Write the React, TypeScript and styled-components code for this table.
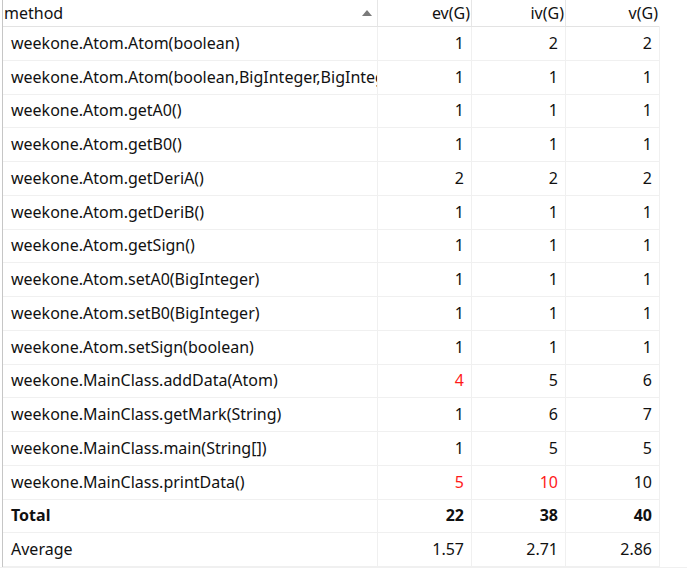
import React from 'react';
import styled, { createGlobalStyle } from 'styled-components';

interface MetricRow {
  method: string;
  ev: string;
  iv: string;
  v: string;
  warn?: Array<'ev' | 'iv' | 'v'>;
  bold?: boolean;
}

const rows: MetricRow[] = [
  { method: 'weekone.Atom.Atom(boolean)', ev: '1', iv: '2', v: '2' },
  { method: 'weekone.Atom.Atom(boolean,BigInteger,BigInteger)', ev: '1', iv: '1', v: '1' },
  { method: 'weekone.Atom.getA0()', ev: '1', iv: '1', v: '1' },
  { method: 'weekone.Atom.getB0()', ev: '1', iv: '1', v: '1' },
  { method: 'weekone.Atom.getDeriA()', ev: '2', iv: '2', v: '2' },
  { method: 'weekone.Atom.getDeriB()', ev: '1', iv: '1', v: '1' },
  { method: 'weekone.Atom.getSign()', ev: '1', iv: '1', v: '1' },
  { method: 'weekone.Atom.setA0(BigInteger)', ev: '1', iv: '1', v: '1' },
  { method: 'weekone.Atom.setB0(BigInteger)', ev: '1', iv: '1', v: '1' },
  { method: 'weekone.Atom.setSign(boolean)', ev: '1', iv: '1', v: '1' },
  { method: 'weekone.MainClass.addData(Atom)', ev: '4', iv: '5', v: '6', warn: ['ev'] },
  { method: 'weekone.MainClass.getMark(String)', ev: '1', iv: '6', v: '7' },
  { method: 'weekone.MainClass.main(String[])', ev: '1', iv: '5', v: '5' },
  { method: 'weekone.MainClass.printData()', ev: '5', iv: '10', v: '10', warn: ['ev', 'iv'] },
  { method: 'Total', ev: '22', iv: '38', v: '40', bold: true },
  { method: 'Average', ev: '1.57', iv: '2.71', v: '2.86' },
];

const GlobalStyle = createGlobalStyle`
  html, body {
    margin: 0;
    padding: 0;
    background: #f0f0f0;
  }
  body {
    font-family: "Noto Sans", "Noto Sans CJK SC", sans-serif;
    color: #111;
  }
`;

const Page = styled.div`
  width: 687px;
  height: 568px;
  background: #ffffff;
  overflow: hidden;
  display: flex;
  flex-direction: column;
`;

const Table = styled.div`
  margin-left: 2px;
  border-left: 1px solid #c6c6c6;
  display: grid;
  grid-template-columns: 375px 94px 94px 94px;
  width: 657px;
`;

const HeaderCell = styled.div<{ $align?: 'left' | 'right'; $last?: boolean }>`
  height: 25px;
  border-bottom: 1px solid #e3e3e3;
  border-right: 1px solid ${p => (p.$last ? 'transparent' : '#e6e6e6')};
  display: flex;
  align-items: center;
  justify-content: ${p => (p.$align === 'right' ? 'flex-end' : 'space-between')};
  padding: 0 1px 1px 1px;
  font-size: 16px;
  white-space: nowrap;
`;

const SortArrow = styled.span`
  width: 0;
  height: 0;
  margin-right: 4px;
  border-left: 5px solid transparent;
  border-right: 5px solid transparent;
  border-bottom: 6px solid #7a7a7a;
`;

const Cell = styled.div<{ $numeric?: boolean; $warn?: boolean; $bold?: boolean }>`
  height: 33.75px;
  box-sizing: border-box;
  border-bottom: 1px solid #f0f0f0;
  border-right: 1px solid #f0f0f0;
  display: flex;
  align-items: center;
  justify-content: ${p => (p.$numeric ? 'flex-end' : 'flex-start')};
  padding: ${p => (p.$numeric ? '0 7px 1px 0' : '0 0 1px 8px')};
  font-size: 16px;
  font-weight: ${p => (p.$bold ? 700 : 400)};
  color: ${p => (p.$warn ? '#ff1a1a' : '#111')};
  white-space: nowrap;
  overflow: hidden;
`;

const Filler = styled.div`
  flex: 1;
  background: #f0f0f0;
`;

const App: React.FC = () => {
  return (
    <>
      <GlobalStyle />
      <Page>
        <Table>
          <HeaderCell>
            <span>method</span>
            <SortArrow />
          </HeaderCell>
          <HeaderCell $align="right">ev(G)</HeaderCell>
          <HeaderCell $align="right">iv(G)</HeaderCell>
          <HeaderCell $align="right" $last>v(G)</HeaderCell>
          {rows.map(row => (
            <React.Fragment key={row.method}>
              <Cell $bold={row.bold}>{row.method}</Cell>
              {(['ev', 'iv', 'v'] as const).map(col => (
                <Cell
                  key={col}
                  $numeric
                  $bold={row.bold}
                  $warn={row.warn?.includes(col)}
                >
                  {row[col]}
                </Cell>
              ))}
            </React.Fragment>
          ))}
        </Table>
        <Filler />
      </Page>
    </>
  );
};

export default App;
